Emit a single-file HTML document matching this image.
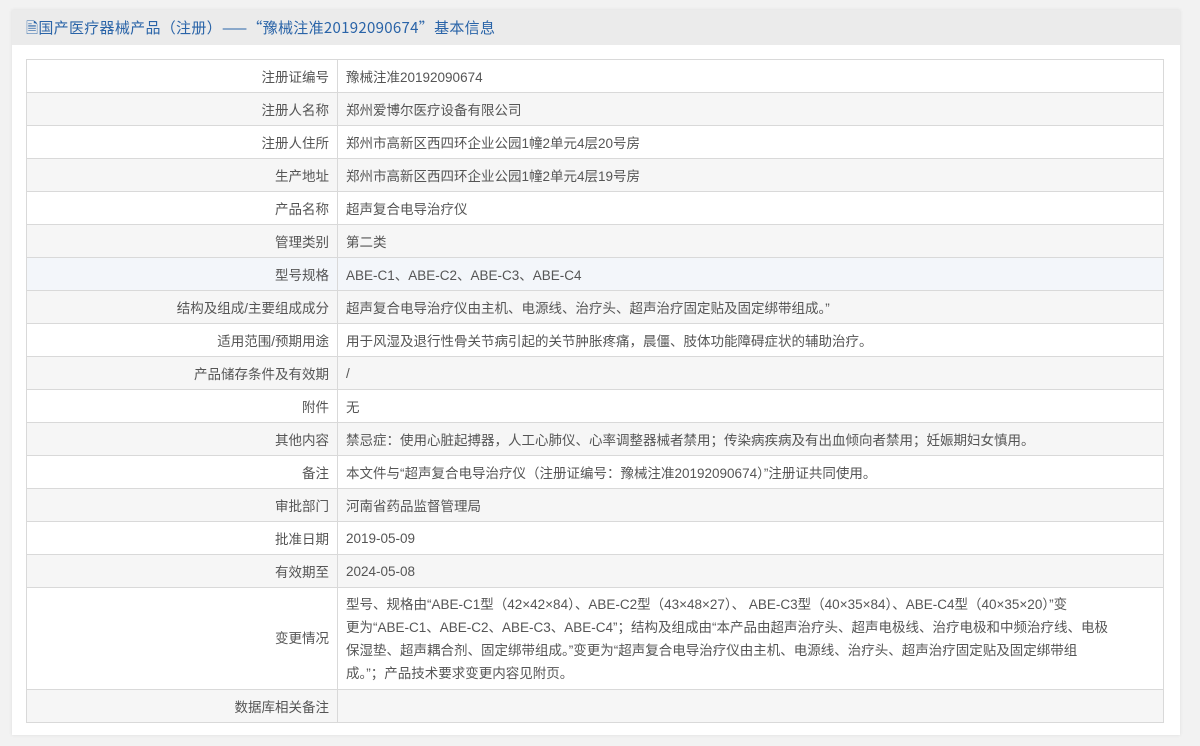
<!DOCTYPE html>
<html><head><meta charset="utf-8"><style>
body{margin:0;background:#f2f2f2;font-family:"Liberation Sans","Noto Sans CJK SC",sans-serif;}
.panel{position:absolute;left:12px;top:10px;width:1168px;height:725px;background:#fff;box-shadow:0 0 3px #ddd;}
.hd{height:35px;background:#ebebeb;color:#2a64a8;font-size:15px;line-height:36px;padding-left:14px;font-family:"Noto Sans CJK SC","Liberation Sans",sans-serif;letter-spacing:0.3px;}
table{position:absolute;left:14px;top:49px;width:1138px;border-collapse:collapse;font-size:13.5px;color:#555;}
td{border:1px solid #d9d9d9;height:32px;padding:0 8px;white-space:nowrap;}
td.l{width:294px;text-align:right;}
tr:nth-child(even){background:#f6f6f6;}
tr.b{background:#f3f6fa;}
.t td{height:101px;line-height:23px;}
</style></head><body>
<div class="panel"><div class="hd">🗎国产医疗器械产品（注册）——“豫械注准20192090674”基本信息</div>
<table>
<tr><td class="l">注册证编号</td><td>豫械注准20192090674</td></tr>
<tr><td class="l">注册人名称</td><td>郑州爱博尔医疗设备有限公司</td></tr>
<tr><td class="l">注册人住所</td><td>郑州市高新区西四环企业公园1幢2单元4层20号房</td></tr>
<tr><td class="l">生产地址</td><td>郑州市高新区西四环企业公园1幢2单元4层19号房</td></tr>
<tr><td class="l">产品名称</td><td>超声复合电导治疗仪</td></tr>
<tr><td class="l">管理类别</td><td>第二类</td></tr>
<tr class="b"><td class="l">型号规格</td><td>ABE-C1、ABE-C2、ABE-C3、ABE-C4</td></tr>
<tr><td class="l">结构及组成/主要组成成分</td><td>超声复合电导治疗仪由主机、电源线、治疗头、超声治疗固定贴及固定绑带组成。”</td></tr>
<tr><td class="l">适用范围/预期用途</td><td>用于风湿及退行性骨关节病引起的关节肿胀疼痛，晨僵、肢体功能障碍症状的辅助治疗。</td></tr>
<tr><td class="l">产品储存条件及有效期</td><td>/</td></tr>
<tr><td class="l">附件</td><td>无</td></tr>
<tr><td class="l">其他内容</td><td>禁忌症：使用心脏起搏器，人工心肺仪、心率调整器械者禁用；传染病疾病及有出血倾向者禁用；妊娠期妇女慎用。</td></tr>
<tr><td class="l">备注</td><td>本文件与“超声复合电导治疗仪（注册证编号：豫械注准20192090674）”注册证共同使用。</td></tr>
<tr><td class="l">审批部门</td><td>河南省药品监督管理局</td></tr>
<tr><td class="l">批准日期</td><td>2019-05-09</td></tr>
<tr><td class="l">有效期至</td><td>2024-05-08</td></tr>
<tr class="t"><td class="l">变更情况</td><td>型号、规格由“ABE-C1型（42×42×84）、ABE-C2型（43×48×27）、 ABE-C3型（40×35×84）、ABE-C4型（40×35×20）”变<br>更为“ABE-C1、ABE-C2、ABE-C3、ABE-C4”；结构及组成由“本产品由超声治疗头、超声电极线、治疗电极和中频治疗线、电极<br>保湿垫、超声耦合剂、固定绑带组成。”变更为“超声复合电导治疗仪由主机、电源线、治疗头、超声治疗固定贴及固定绑带组<br>成。”；产品技术要求变更内容见附页。</td></tr>
<tr><td class="l">数据库相关备注</td><td></td></tr>
</table></div>
</body></html>
